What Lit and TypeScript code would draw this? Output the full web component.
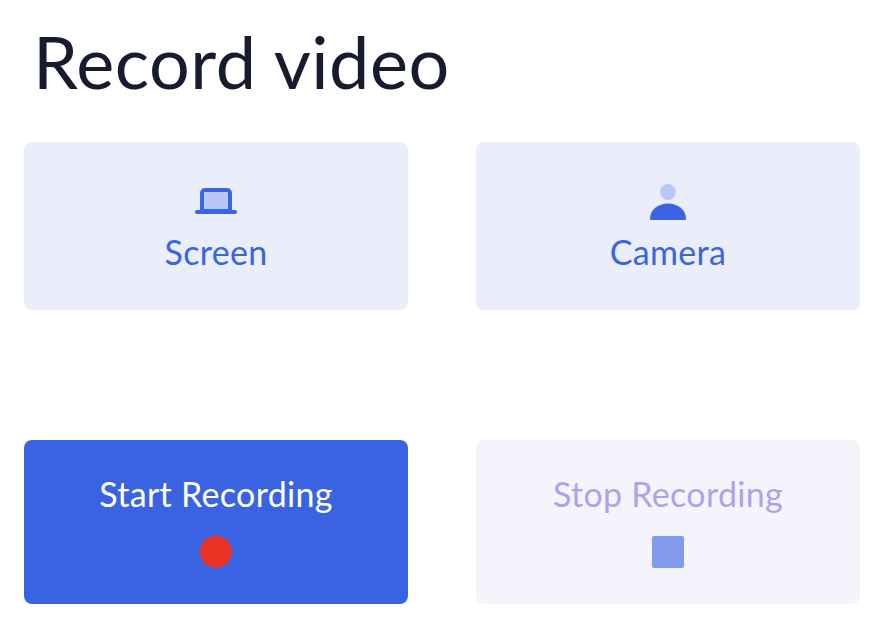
import { LitElement, html, css } from "lit";
import { customElement } from "lit/decorators.js";

@customElement("app-root")
export class AppRoot extends LitElement {
  static styles = css`
    :host { display: block; font-family: "Lato", "Noto Sans", sans-serif; background: #fff; height: 620px; overflow: hidden; }
    .wrap { padding: 0 25px 0 24px; }
    h1 { margin: 0; font-weight: 400; font-size: 72px; line-height: 72px; letter-spacing: 0.5px; padding: 25px 0 0 9px; height: 142px; box-sizing: border-box; color: #161b2e; }
    .grid { display: grid; grid-template-columns: 384px 384px; column-gap: 68px; }
    .card { border-radius: 8px; display: flex; flex-direction: column; align-items: center; font-size: 34px; letter-spacing: 0.3px; line-height: 40px; box-sizing: border-box; }
    .src { height: 168px; background: #eaeefa; color: #3b64e3; padding-top: 40px; gap: 10px; }
    .src svg { display: block; }
    .act { height: 164px; padding-top: 34px; gap: 22px; margin-top: 130px; }
    .start { background: #3a63e1; color: #fff; }
    .stop { background: #f5f4fd; color: #aea3e8; }
    .dot { width: 32px; height: 32px; border-radius: 50%; background: #ea3323; }
    .sq { width: 32px; height: 32px; border-radius: 2px; background: #829bec; }
  `;
  render() {
    return html`<div class="wrap">
      <h1>Record video</h1>
      <div class="grid">
        <div class="card src">
          <svg width="48" height="40" viewBox="0 0 48 40">
            <path d="M10 29V11a3 3 0 0 1 3-3h22a3 3 0 0 1 3 3v18z" fill="#b9c7f4" stroke="#3b64e3" stroke-width="4"/>
            <rect x="3" y="28" width="42" height="4" rx="2" fill="#3b64e3"/>
          </svg>
          Screen
        </div>
        <div class="card src">
          <svg width="48" height="40" viewBox="0 0 48 40">
            <circle cx="24" cy="10" r="8" fill="#b9c7f4"/>
            <path d="M6 36.500C6 28 14 21.500 24 21.500S42 28 42 36.500q0 1.500-1.500 1.500h-33q-1.500 0-1.500-1.500z" fill="#3b64e3"/>
          </svg>
          Camera
        </div>
        <div class="card act start">Start Recording<div class="dot"></div></div>
        <div class="card act stop">Stop Recording<div class="sq"></div></div>
      </div>
    </div>`;
  }
}
